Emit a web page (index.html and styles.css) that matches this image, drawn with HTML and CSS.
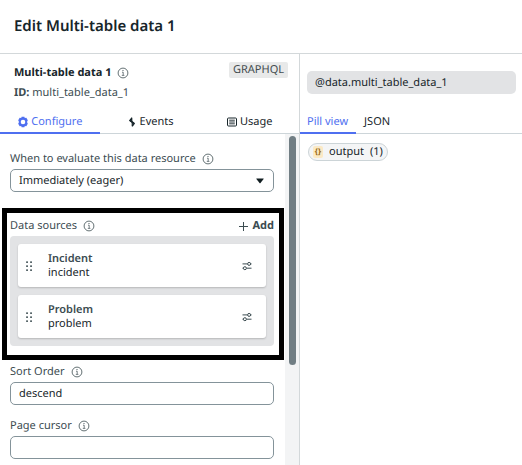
FILE: index.html
```html
<!DOCTYPE html>
<html lang="en">
<head>
<meta charset="utf-8">
<meta name="viewport" content="width=device-width, initial-scale=1">
<title>Edit Multi-table data 1</title>
<link rel="stylesheet" href="styles.css">
</head>
<body>
<svg class="sprite" aria-hidden="true">
  <symbol id="info" viewBox="0 0 12 12"><circle cx="6" cy="6" r="4.9" fill="none" stroke="currentColor" stroke-width=".8"/><path d="M5 5.2h1.2v3M4.8 8.4h2.6" fill="none" stroke="currentColor" stroke-width=".7"/><circle cx="6" cy="3.5" r=".6" fill="currentColor"/></symbol>
  <symbol id="grip" viewBox="0 0 8 12"><g fill="currentColor"><rect x="1.2" y="1.2" width="1.7" height="1.7" rx=".5"/><rect x="5.2" y="1.2" width="1.7" height="1.7" rx=".5"/><rect x="1.2" y="5.2" width="1.7" height="1.7" rx=".5"/><rect x="5.2" y="5.2" width="1.7" height="1.7" rx=".5"/><rect x="1.2" y="9.2" width="1.7" height="1.7" rx=".5"/><rect x="5.2" y="9.2" width="1.7" height="1.7" rx=".5"/></g></symbol>
  <symbol id="sliders" viewBox="0 0 10 10"><g fill="none" stroke="currentColor" stroke-width="1"><path d="M.5 2.9h4.9M8.9 2.9h.6M.5 7.2h.7M4.7 7.2h4.8"/><circle cx="7.1" cy="2.9" r="1.5"/><circle cx="2.9" cy="7.2" r="1.5"/></g></symbol>
</svg>
<header class="page-header"><h1>Edit Multi-table data 1</h1></header>
<main class="panes">
  <section class="editor">
    <div class="summary">
      <div>
        <h2>Multi-table data 1 <svg class="info"><use href="#info"/></svg></h2>
        <p class="resource-id"><b>ID:</b> multi_table_data_1</p>
      </div>
      <span class="tag">GRAPHQL</span>
    </div>
    <nav class="tabs editor-tabs">
      <button class="tab active" type="button"><svg class="tab-icon" viewBox="0 0 12 12"><path fill="currentColor" fill-rule="evenodd" d="M4.6.8h2.8l.4 1.3 1.5-.3 1.5 2.4L10 6l.8 1.8-1.5 2.4-1.5-.3-.4 1.3H4.6l-.4-1.3-1.5.3-1.5-2.4L2 6l-.8-1.8 1.5-2.4 1.5.3zM6 3.7a2.3 2.3 0 1 0 0 4.6 2.3 2.3 0 0 0 0-4.6z"/></svg>Configure</button>
      <button class="tab" type="button"><svg class="tab-icon" viewBox="0 0 12 12"><path fill="none" stroke="currentColor" stroke-width="1.1" stroke-linejoin="round" d="M6 1.6L3.6 4.6 8.4 7.4 6.2 10.4M5.8 1.8v3.2M6.2 7v3.2"/><path fill="currentColor" d="M4.7 3.6l3.9 3.4-1.4 1.2L3.6 5z"/></svg>Events</button>
      <button class="tab" type="button"><svg class="tab-icon" viewBox="0 0 12 12"><rect x="1.5" y="2" width="9" height="8" rx="1" fill="none" stroke="currentColor"/><path stroke="currentColor" stroke-width=".9" d="M3.2 4.2h5.6M3.2 6h5.6M3.2 7.8h5.6"/></svg>Usage</button>
    </nav>
    <div class="scroll-area">
      <form class="fields">
        <div class="field">
          <div class="label-row"><label for="evaluate">When to evaluate this data resource</label><svg class="info"><use href="#info"/></svg></div>
          <div class="select-wrap">
            <select id="evaluate" class="control"><option>Immediately (eager)</option></select>
            <svg class="caret" viewBox="0 0 8 6"><path fill="#111d20" d="M.6.5h6.8q.6 0 .2.6L4.5 5q-.5.6-1 0L.4 1.1Q0 .5.6.5z"/></svg>
          </div>
        </div>
        <section class="sources">
          <div class="sources-head">
            <div class="label-row"><span>Data sources</span><svg class="info"><use href="#info"/></svg></div>
            <button class="add" type="button"><svg viewBox="0 0 8 8"><path d="M4 0v8M0 4h8" stroke="currentColor" stroke-width=".9"/></svg>Add</button>
          </div>
          <ul class="source-list">
            <li class="source"><svg class="grip"><use href="#grip"/></svg><div class="source-text"><strong>Incident</strong><span>incident</span></div><button class="settings" type="button" aria-label="Configure Incident"><svg><use href="#sliders"/></svg></button></li>
            <li class="source"><svg class="grip"><use href="#grip"/></svg><div class="source-text"><strong>Problem</strong><span>problem</span></div><button class="settings" type="button" aria-label="Configure Problem"><svg><use href="#sliders"/></svg></button></li>
          </ul>
        </section>
        <div class="field">
          <div class="label-row"><label for="sort">Sort Order</label><svg class="info"><use href="#info"/></svg></div>
          <input id="sort" class="control" type="text" value="descend">
        </div>
        <div class="field">
          <div class="label-row"><label for="cursor">Page cursor</label><svg class="info"><use href="#info"/></svg></div>
          <input id="cursor" class="control" type="text">
        </div>
      </form>
      <div class="track"><div class="thumb"></div></div>
    </div>
  </section>
  <section class="preview">
    <div class="binding">@data.multi_table_data_1</div>
    <nav class="tabs preview-tabs">
      <button class="tab active" type="button">Pill view</button>
      <button class="tab" type="button">JSON</button>
    </nav>
    <div class="pills"><span class="pill"><span class="type">{}</span><span>output</span><span>(1)</span></span></div>
  </section>
</main>
</body>
</html>
```
FILE: styles.css
```css
* { box-sizing: border-box; }
body {
  margin: 0;
  min-height: 100vh;
  display: flex;
  flex-direction: column;
  background: #fff;
  color: #17252a;
  font: 11px/16px "Noto Sans", sans-serif;
  text-rendering: geometricPrecision;
}
h1, h2, p, ul { margin: 0; padding: 0; }
button, input, select { font: inherit; color: inherit; text-rendering: inherit; }
button { padding: 0; border: 0; background: none; }
svg { flex: none; }
.sprite { position: absolute; width: 0; height: 0; }
.page-header {
  padding: 14px 14px 15px;
  border-bottom: 1px solid #d3d8da;
}
h1 { font-size: 15px; line-height: 24px; font-weight: 600; }
.panes { flex: 1; display: grid; grid-template-columns: 300fr 222fr; }
.editor {
  display: flex;
  flex-direction: column;
  min-width: 0;
  border-right: 1px solid #d3d8da;
}
.summary {
  display: flex;
  justify-content: space-between;
  align-items: flex-start;
  padding: 8px 11px 0 14px;
}
h2 {
  display: flex;
  align-items: center;
  gap: 6px;
  padding-top: 3px;
  font-size: 11px;
  line-height: 16px;
  font-weight: 700;
}
.info { width: 12px; height: 12px; color: #3c4c51; }
.resource-id { margin-top: 4px; color: #3c4c51; }
.tag {
  padding: 0 4px;
  border-radius: 2px;
  background: #e8e9e9;
  color: #444d50;
}
.tabs { display: flex; border-bottom: 1px solid #cdd5d9; }
.tab {
  display: flex;
  align-items: center;
  justify-content: center;
  gap: 2px;
  height: 24px;
  margin-bottom: -1px;
  padding-top: 1px;
  border-bottom: 2px solid transparent;
}
.tab.active { color: #4f6ff0; border-color: #4f6ff0; }
.editor-tabs { margin-top: 9px; }
.editor-tabs .tab { flex: 1; }
.tab-icon { width: 12px; height: 12px; }
.scroll-area { flex: 1; display: flex; }
.fields { flex: 1; min-width: 0; padding: 17px 11px 6px 10px; }
.field + .field { margin-top: 13px; }
.label-row { display: flex; align-items: center; gap: 6px; margin-bottom: 2px; color: #3c4c51; }
.control {
  display: block;
  width: 100%;
  height: 23px;
  padding: 0 8px;
  border: 1px solid #84939a;
  border-radius: 5px;
  background: #fff;
  appearance: none;
}
.select-wrap { position: relative; }
.caret { position: absolute; right: 10px; top: 9px; width: 8px; height: 6px; pointer-events: none; }
.sources {
  margin: 16px -10px 4px -8px;
  padding: 3px 5px 9px 3px;
  border: 5px solid #000;
}
.sources-head { display: flex; align-items: center; justify-content: space-between; height: 20px; }
.sources-head .label-row { margin: 0; }
.add { display: flex; align-items: center; gap: 4px; font-weight: 700; color: #3c4c51; }
.add svg { width: 9px; height: 9px; }
.source-list {
  display: grid;
  gap: 8px;
  padding: 8px;
  border-radius: 4px;
  background: #e2e3e5;
  list-style: none;
}
.source {
  display: flex;
  align-items: center;
  height: 43px;
  padding: 0 14px 0 7px;
  border-radius: 3px;
  background: #fff;
  box-shadow: 0 1px 2px #0003;
}
.grip { width: 8px; height: 12px; color: #3c4c51; }
.source-text { flex: 1; display: grid; margin-left: 15px; line-height: 14px; }
.source-text strong { font-weight: 600; color: #3c4c51; }
.settings svg { display: block; width: 10px; height: 10px; color: #3c4c51; }
.track { width: 14px; padding: 2px 3px 0 4px; background: #f3f4f5; }
.thumb { height: 229px; border-radius: 4px; background: #717e84; }
.preview { min-width: 0; }
.binding {
  margin: 17px 6px 16px 7px;
  padding: 4px 8px 3px;
  border-radius: 5px;
  background: #e2e3e5;
}
.preview-tabs .tab { padding: 1px 8px 0; }
.preview-tabs .tab.active { padding-left: 7px; }
.pills { padding: 9px 8px; }
.pill {
  display: inline-flex;
  align-items: center;
  gap: 6px;
  padding: 0 4px 0 4px;
  border: 1px solid #ccd4d7;
  border-radius: 9px;
  background: #f4f5f6;
}
.type {
  width: 10px;
  border-radius: 2px;
  background: #fbe9c5;
  color: #9a6a16;
  font-size: 8px;
  line-height: 12px;
  font-weight: 700;
  text-align: center;
}
```
